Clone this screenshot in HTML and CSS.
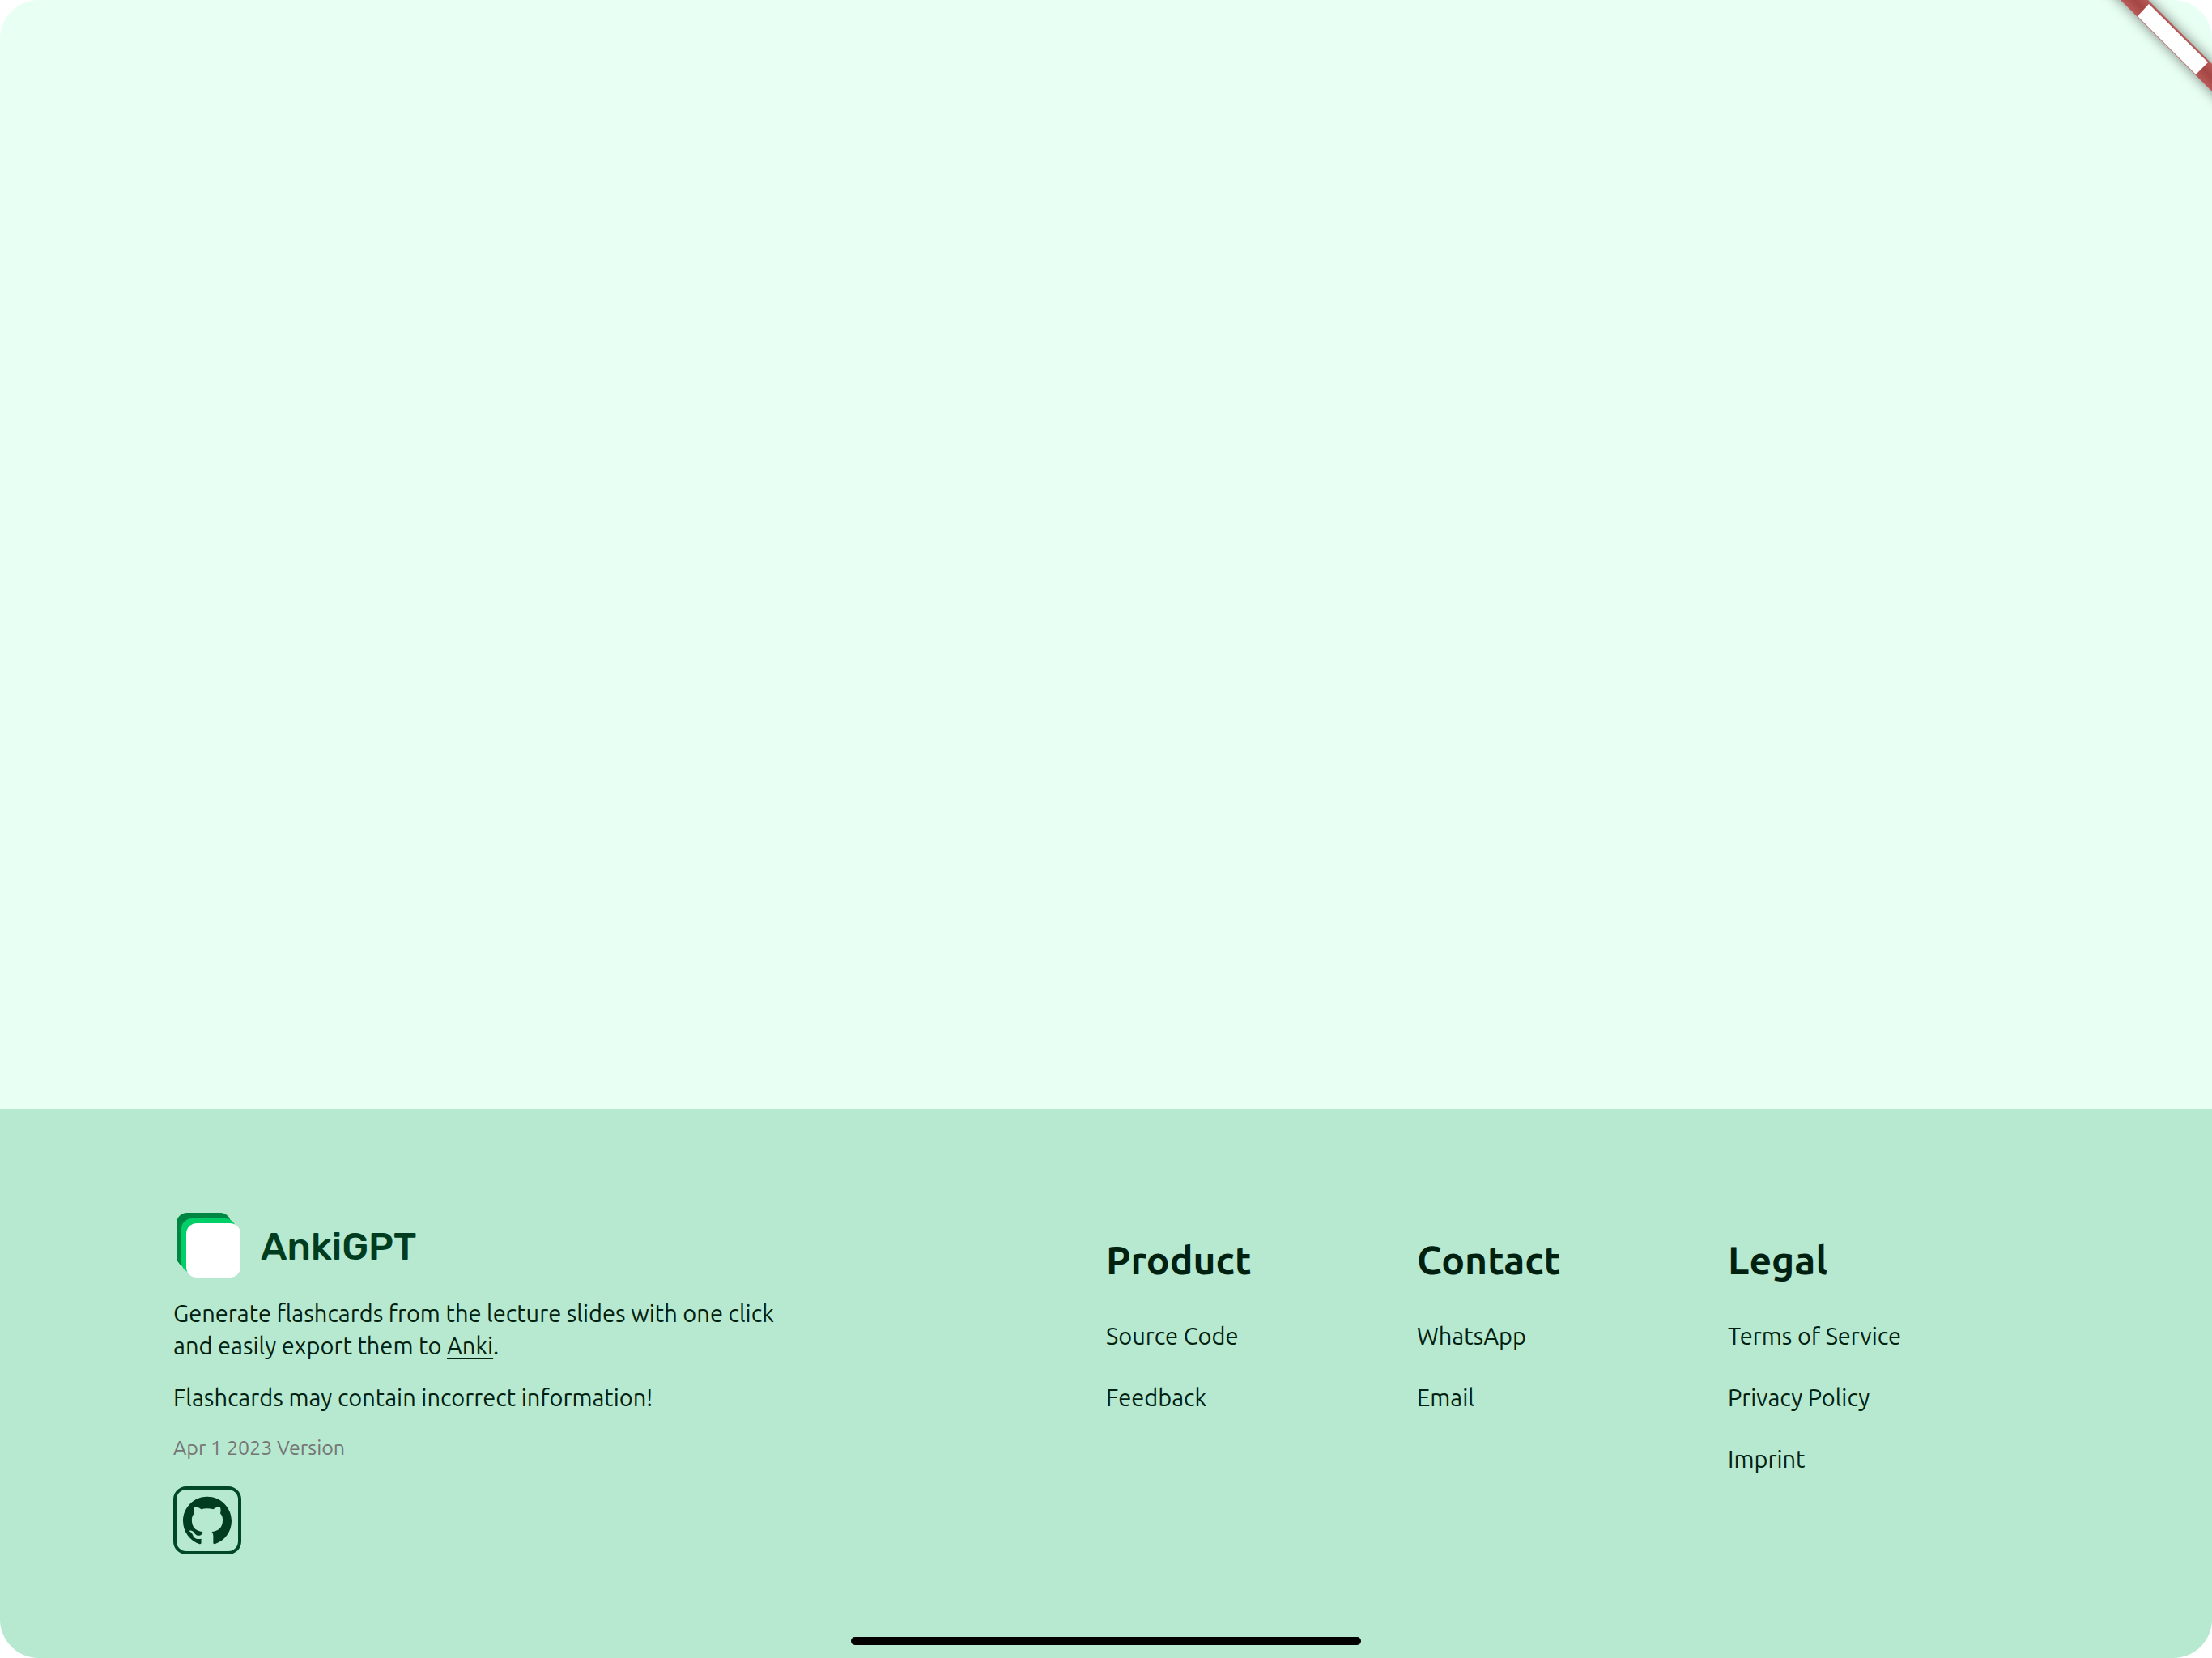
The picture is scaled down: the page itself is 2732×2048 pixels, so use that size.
FILE: index.html
```html
<!DOCTYPE html>
<html lang="en">
<head>
<meta charset="utf-8">
<meta name="viewport" content="width=device-width, initial-scale=1">
<title>AnkiGPT</title>
<link rel="stylesheet" href="styles.css">
</head>
<body>
<div class="screen">
  <main class="content"></main>
  <footer class="footer">
    <div class="footer-inner">
      <section class="about">
        <div class="brand">
          <svg class="brand-logo" viewBox="0 0 84 84" aria-hidden="true">
            <rect x="4" y="0" width="67" height="67" rx="13" fill="#008542"/>
            <rect x="10" y="7" width="67" height="67" rx="13" fill="#00cf68"/>
            <rect x="16" y="13" width="67" height="67" rx="13" fill="#fff"/>
          </svg>
          <span class="brand-name">AnkiGPT</span>
        </div>
        <p class="text">Generate flashcards from the lecture slides with one click<br>and easily export them to <a class="inline-link" href="#anki">Anki</a>.</p>
        <p class="text">Flashcards may contain incorrect information!</p>
        <p class="version">Apr 1 2023 Version</p>
        <a class="github" href="#github" aria-label="GitHub">
          <svg class="github-icon" viewBox="0 0 24 24" aria-hidden="true"><path fill="currentColor" d="M12 .297c-6.63 0-12 5.373-12 12 0 5.303 3.438 9.8 8.205 11.385.6.113.82-.258.82-.577 0-.285-.01-1.04-.015-2.04-3.338.724-4.042-1.61-4.042-1.61C4.422 18.07 3.633 17.7 3.633 17.7c-1.087-.744.084-.729.084-.729 1.205.084 1.838 1.236 1.838 1.236 1.07 1.835 2.809 1.305 3.495.998.108-.776.417-1.305.76-1.605-2.665-.3-5.466-1.332-5.466-5.93 0-1.31.465-2.38 1.235-3.22-.135-.303-.54-1.523.105-3.176 0 0 1.005-.322 3.3 1.23.96-.267 1.98-.399 3-.405 1.02.006 2.04.138 3 .405 2.28-1.552 3.285-1.23 3.285-1.23.645 1.653.24 2.873.12 3.176.765.84 1.23 1.91 1.23 3.22 0 4.61-2.805 5.625-5.475 5.92.42.36.81 1.096.81 2.22 0 1.606-.015 2.896-.015 3.286 0 .315.21.69.825.57C20.565 22.092 24 17.592 24 12.297c0-6.627-5.373-12-12-12"/></svg>
        </a>
      </section>
      <nav class="column" aria-label="Product">
        <h2 class="column-title">Product</h2>
        <a class="link" href="#source">Source Code</a>
        <a class="link" href="#feedback">Feedback</a>
      </nav>
      <nav class="column" aria-label="Contact">
        <h2 class="column-title">Contact</h2>
        <a class="link" href="#whatsapp">WhatsApp</a>
        <a class="link" href="#email">Email</a>
      </nav>
      <nav class="column" aria-label="Legal">
        <h2 class="column-title">Legal</h2>
        <a class="link" href="#terms">Terms of Service</a>
        <a class="link" href="#privacy">Privacy Policy</a>
        <a class="link" href="#imprint">Imprint</a>
      </nav>
    </div>
  </footer>
  <svg class="ribbon" viewBox="0 0 172 160" aria-hidden="true">
    <defs>
      <filter id="soft" x="-50%" y="-50%" width="200%" height="200%"><feGaussianBlur stdDeviation="8"/></filter>
      <linearGradient id="red" gradientUnits="userSpaceOnUse" x1="59" y1="0" x2="76" y2="-17">
        <stop offset="0" stop-color="#b95a58"/>
        <stop offset=".5" stop-color="#a44644"/>
        <stop offset="1" stop-color="#b95a58"/>
      </linearGradient>
    </defs>
    <path d="M53 -40L253 160H219L19 -40z" fill="#000" fill-opacity=".5" filter="url(#soft)"/>
    <path d="M53 -40L253 160H219L19 -40z" fill="url(#red)"/>
    <path d="M94 5L80 20L152 92L167 77z" fill="#fff"/>
  </svg>
  <div class="home-indicator"></div>
</div>
</body>
</html>
```

FILE: styles.css
```css
* {
  box-sizing: border-box;
}

body {
  margin: 0;
  background: #fff;
  color: #002110;
  font-family: Ubuntu, "Noto Sans", sans-serif;
  font-size: 29px;
  line-height: 40px;
}

.screen {
  position: relative;
  display: flex;
  flex-direction: column;
  min-height: 100vh;
  border-radius: 48px;
  overflow: hidden;
  background: #e8fff3;
}

.content {
  flex: 1;
}

.footer {
  padding: 128px 32px;
  background: #b7e8d0;
}

.footer-inner {
  display: grid;
  grid-template-columns: 3fr 1fr 1fr 1fr;
  max-width: 2304px;
  margin: 0 auto;
}

.brand {
  display: flex;
  align-items: center;
  gap: 24px;
  margin-bottom: 20px;
}

.brand-logo {
  width: 84px;
  height: 84px;
}

.brand-name {
  color: #003d20;
  font-family: Rubik, Inter, sans-serif;
  font-size: 47px;
  font-weight: 500;
}

.text {
  margin: 0 0 24px;
}

.inline-link {
  color: inherit;
  text-decoration-thickness: 2px;
  text-underline-offset: 4px;
}

.version {
  margin: 0 0 30px;
  color: #757575;
  font-size: 25px;
  line-height: 36px;
}

.github {
  display: flex;
  align-items: center;
  justify-content: center;
  width: 84px;
  height: 84px;
  border: 4px solid #00472a;
  border-radius: 16px;
  color: #003d20;
}

.github-icon {
  width: 60px;
  height: 60px;
}

.column {
  display: flex;
  flex-direction: column;
  align-items: flex-start;
  gap: 36px;
  padding-top: 26px;
}

.column-title {
  margin: 0 0 6px;
  font-size: 48px;
  font-weight: 600;
  line-height: 64px;
}

.link {
  color: inherit;
  text-decoration: none;
}

.ribbon {
  position: absolute;
  top: 0;
  right: 0;
  width: 172px;
  height: 160px;
}

.home-indicator {
  position: absolute;
  bottom: 16px;
  left: 50%;
  width: 630px;
  height: 10px;
  border-radius: 5px;
  background: #000;
  transform: translateX(-50%);
}
```
